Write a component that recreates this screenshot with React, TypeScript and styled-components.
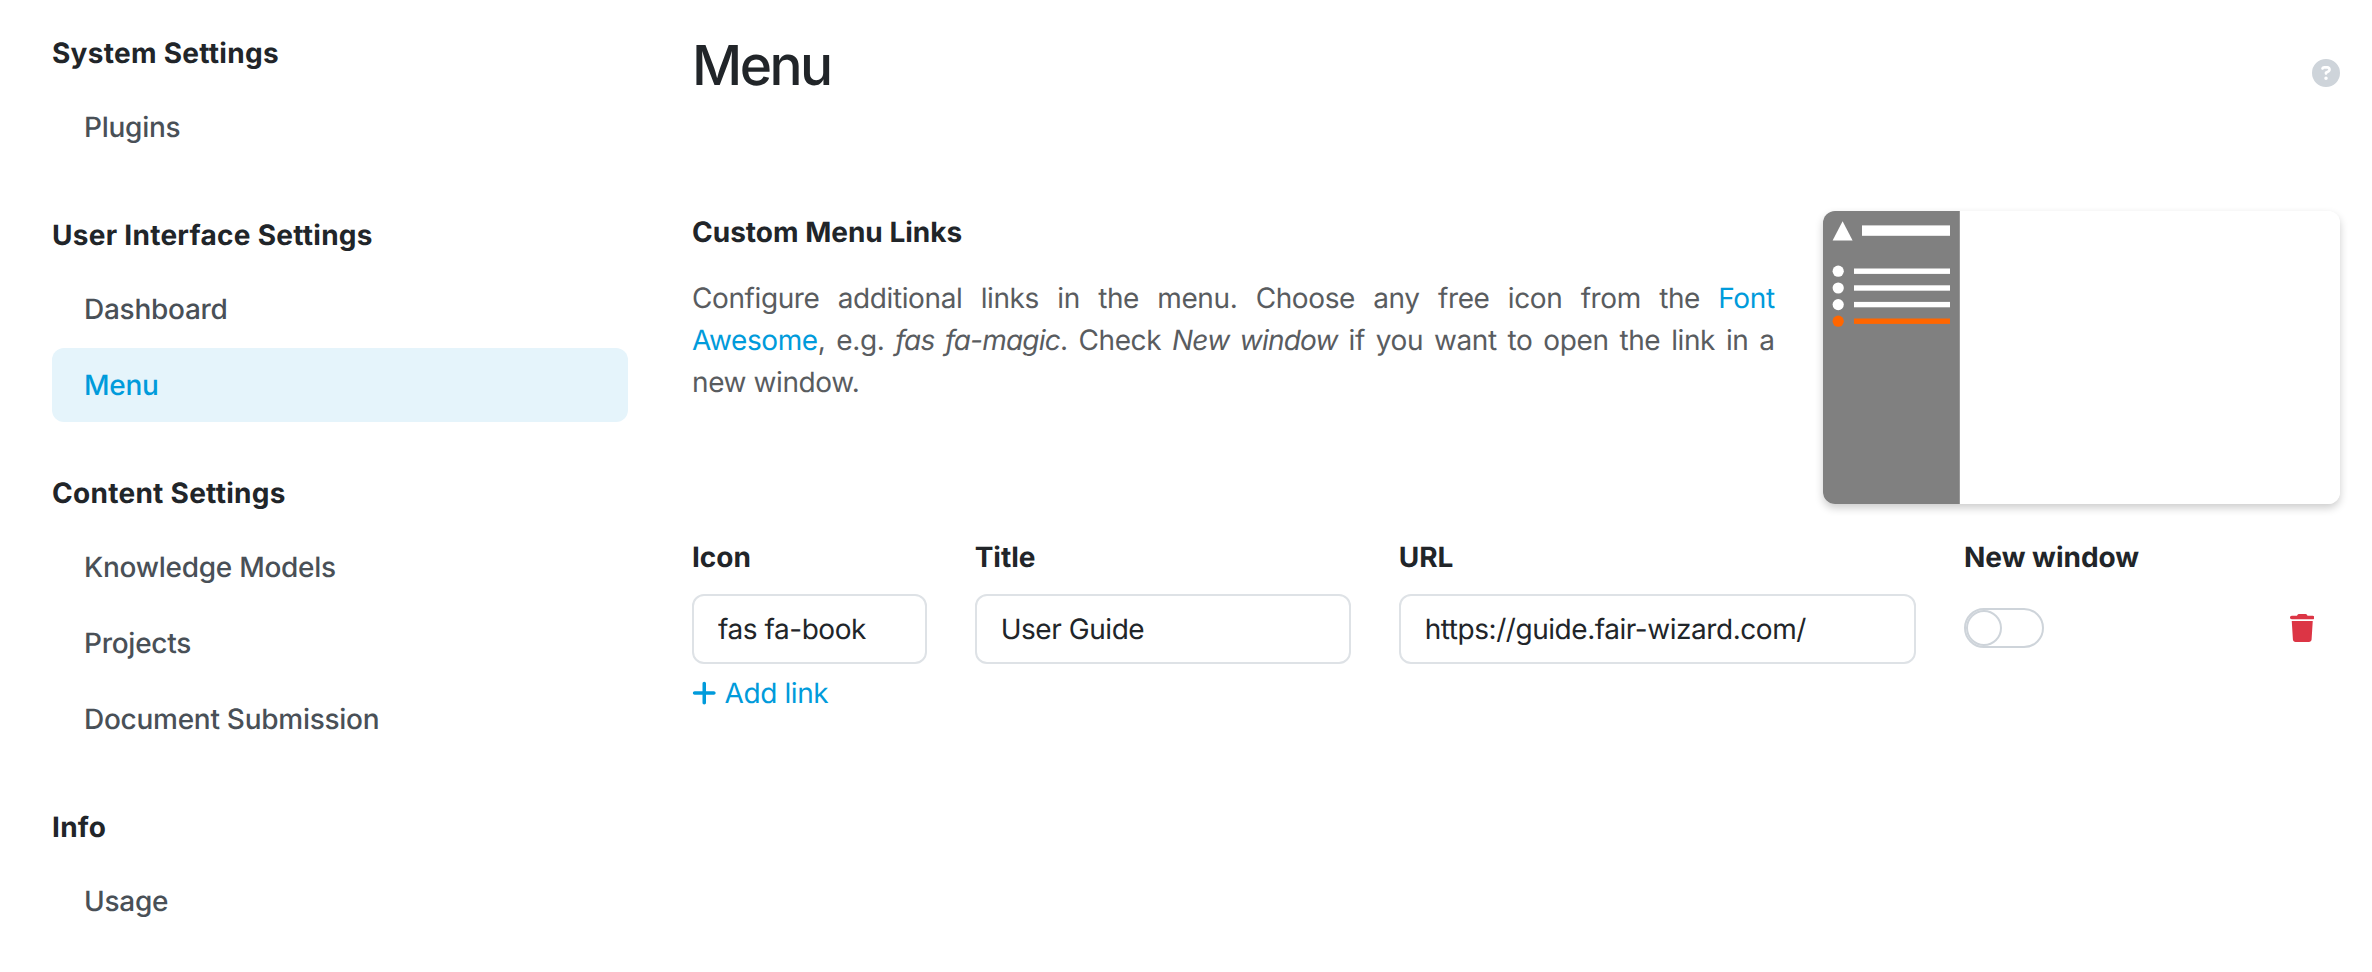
import React from "react";
import styled, { createGlobalStyle } from "styled-components";
import { FaTrash, FaPlus, FaCircleQuestion } from "react-icons/fa6";

const GlobalStyle = createGlobalStyle`
  *, *::before, *::after { box-sizing: border-box; }
  body {
    margin: 0;
    background: #fff;
    color: #212529;
    font-family: Inter, "Liberation Sans", sans-serif;
    font-size: 28px;
    line-height: 42px;
    text-rendering: geometricPrecision;
  }
`;

const Page = styled.div`
  display: flex;
  gap: 64px;
  padding: 32px 32px 0 52px;
  height: 972px;
  overflow: hidden;
`;

const Sidebar = styled.nav`
  flex: none;
  width: 576px;
  display: flex;
  flex-direction: column;
  gap: 50px;
`;

const NavGroup = styled.section`
  display: flex;
  flex-direction: column;
  gap: 16px;
`;

const NavHeading = styled.strong`
  font-weight: 700;
  letter-spacing: 0.28px;
`;

const NavList = styled.div`
  display: flex;
  flex-direction: column;
  gap: 2px;
`;

const NavItem = styled.a<{ $active?: boolean }>`
  padding: 16px 32px;
  border-radius: 12px;
  font-weight: 500;
  letter-spacing: -0.27px;
  color: ${(p) => (p.$active ? "#009bdb" : "#495057")};
  background: ${(p) => (p.$active ? "#e5f4fb" : "transparent")};
`;

const Content = styled.main`
  flex: 1;
  min-width: 0;
`;

const Header = styled.header`
  display: flex;
  justify-content: space-between;
  align-items: flex-start;
  height: 179px;
`;

const PageTitle = styled.h2`
  margin: 0;
  font-size: 55px;
  line-height: 69px;
  font-weight: 500;
  letter-spacing: -2.5px;
`;

const HelpLink = styled.a`
  display: flex;
  margin-top: 27px;
  color: #ced4da;
  font-size: 28px;
`;

const Intro = styled.section`
  display: grid;
  grid-template-columns: repeat(12, 1fr);
  column-gap: 48px;
  height: 325px;
  align-items: start;
`;

const Description = styled.div`
  grid-column: span 8;
`;

const SectionTitle = styled.strong`
  display: block;
  margin-bottom: 24px;
  font-weight: 700;
`;

const Text = styled.p`
  margin: 0;
  color: #595c5f;
  text-align: justify;
  letter-spacing: -0.4px;

  em { letter-spacing: -0.8px; }
`;

const Link = styled.a`
  color: #009bdb;
`;

const Preview = styled.div`
  grid-column: span 4;
  height: 293px;
  border-radius: 12px;
  overflow: hidden;
  box-shadow: 0 4px 8px rgba(0, 0, 0, 0.2);

  svg { display: block; }
`;

const LinkGrid = styled.div`
  display: grid;
  grid-template-columns: repeat(12, 1fr);
  column-gap: 48px;
  row-gap: 16px;
`;

const Label = styled.strong<{ $span: number }>`
  grid-column: span ${(p) => p.$span};
  font-weight: 700;
`;

const Field = styled.input<{ $span: number }>`
  grid-column: span ${(p) => p.$span};
  min-width: 0;
  width: 100%;
  height: 70px;
  padding: 0 24px;
  border: 2px solid #dee2e6;
  border-radius: 12px;
  background: #fff;
  color: #212529;
  font: inherit;
  letter-spacing: -0.45px;
  text-rendering: inherit;
  outline: none;
`;

const RowEnd = styled.div`
  grid-column: span 3;
  display: flex;
  justify-content: space-between;
  padding: 14px 26px 0 0;
`;

const Toggle = styled.button`
  display: flex;
  width: 80px;
  height: 40px;
  padding: 0;
  border: 2px solid #ced4da;
  border-radius: 20px;
  background: #fff;
`;

const Thumb = styled.span`
  width: 36px;
  height: 36px;
  border: 2px solid #ced4da;
  border-radius: 50%;
`;

const DeleteButton = styled.button`
  display: flex;
  padding: 0;
  margin-top: 6px;
  height: 29px;
  border: 0;
  background: none;
  color: #dc3545;
  font-size: 28px;

  svg { width: 0.875em; }
`;

const AddLink = styled.a`
  display: flex;
  align-items: center;
  gap: 8px;
  width: max-content;
  margin-top: 8px;
  color: #009bdb;
  letter-spacing: -0.4px;

  svg { width: 0.875em; }
`;

const groups = [
  { title: "System Settings", items: ["Plugins"] },
  { title: "User Interface Settings", items: ["Dashboard", "Menu"] },
  { title: "Content Settings", items: ["Knowledge Models", "Projects", "Document Submission"] },
  { title: "Info", items: ["Usage"] },
];

function MenuPreview() {
  const rows = [65.6, 82.4, 99, 115.6];
  return (
    <svg width="100%" height="293" viewBox="0 0 517.33 293" preserveAspectRatio="none">
      <rect width="517.33" height="293" fill="#fff" />
      <rect width="136.8" height="293" fill="#808080" />
      <path d="M19.6 10.2 29.6 29.6H9.6z" fill="#fff" />
      <rect x="39" y="14.4" width="88" height="10.4" fill="#fff" />
      {rows.map((y, i) => (
        <g key={y} fill={i === 3 ? "#ff6600" : "#fff"} transform="translate(0 -5.4)">
          <circle cx="15.2" cy={y} r="5.6" />
          <rect x="31" y={y - 2.7} width="96" height="5.4" />
        </g>
      ))}
    </svg>
  );
}

export default function App() {
  return (
    <>
      <GlobalStyle />
      <Page>
        <Sidebar>
          {groups.map((group) => (
            <NavGroup key={group.title}>
              <NavHeading>{group.title}</NavHeading>
              <NavList>
                {group.items.map((item) => (
                  <NavItem key={item} $active={item === "Menu"}>{item}</NavItem>
                ))}
              </NavList>
            </NavGroup>
          ))}
        </Sidebar>
        <Content>
          <Header>
            <PageTitle>Menu</PageTitle>
            <HelpLink><FaCircleQuestion /></HelpLink>
          </Header>
          <Intro>
            <Description>
              <SectionTitle>Custom Menu Links</SectionTitle>
              <Text>
                Configure additional links in the menu. Choose any free icon from the{" "}
                <Link>Font Awesome</Link>, e.g. <em>fas fa-magic</em>. Check{" "}
                <em>New window</em> if you want to open the link in a new window.
              </Text>
            </Description>
            <Preview><MenuPreview /></Preview>
          </Intro>
          <LinkGrid>
            <Label $span={2}>Icon</Label>
            <Label $span={3}>Title</Label>
            <Label $span={4}>URL</Label>
            <Label $span={3}>New window</Label>
            <Field $span={2} defaultValue="fas fa-book" />
            <Field $span={3} defaultValue="User Guide" />
            <Field $span={4} defaultValue="https://guide.fair-wizard.com/" />
            <RowEnd>
              <Toggle><Thumb /></Toggle>
              <DeleteButton><FaTrash /></DeleteButton>
            </RowEnd>
          </LinkGrid>
          <AddLink><FaPlus />Add link</AddLink>
        </Content>
      </Page>
    </>
  );
}
